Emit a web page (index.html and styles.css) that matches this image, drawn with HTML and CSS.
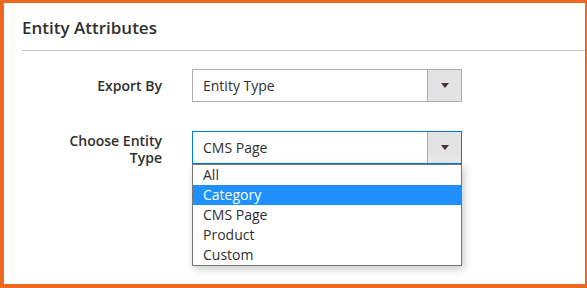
FILE: index.html
```html
<!DOCTYPE html>
<html lang="en">
<head>
<meta charset="utf-8">
<title>Entity Attributes</title>
<link rel="stylesheet" href="styles.css">
</head>
<body>
<div class="frame">
  <div class="section-title">Entity Attributes</div>
  <div class="form">
    <div class="field">
      <div class="label label-single">Export By</div>
      <div class="select">
        <span class="select-value">Entity Type</span>
        <span class="select-btn"><span class="arrow"></span></span>
      </div>
    </div>
    <div class="field">
      <div class="label label-multi">Choose Entity<br>Type</div>
      <div class="select select-focus">
        <span class="select-value">CMS Page</span>
        <span class="select-btn"><span class="arrow"></span></span>
        <ul class="options">
          <li class="option">All</li>
          <li class="option option-active">Category</li>
          <li class="option">CMS Page</li>
          <li class="option">Product</li>
          <li class="option">Custom</li>
        </ul>
      </div>
    </div>
  </div>
</div>
</body>
</html>
```

FILE: styles.css
```css
html, body {
  margin: 0;
  padding: 0;
  background: #ffffff;
}
body {
  font-family: "Open Sans", "DejaVu Sans", sans-serif;
  color: #303030;
}
.frame {
  box-sizing: border-box;
  width: 587px;
  height: 288px;
  border-style: solid;
  border-color: #ee6723;
  border-width: 3px 2px 4px 4px;
  background: #ffffff;
  overflow: hidden;
}
.section-title {
  margin-left: 18px;
  padding-top: 13px;
  padding-bottom: 10px;
  font-size: 17px;
  line-height: 24px;
  font-weight: 600;
  color: #303030;
  border-bottom: 1px solid #c9c3b6;
}
.form {
  display: flex;
  flex-direction: column;
  gap: 29px;
  margin-top: 18px;
  padding-left: 18px;
}
.field {
  display: flex;
  gap: 30px;
}
.label {
  width: 140px;
  text-align: right;
  font-size: 14px;
  font-weight: 600;
  color: #303030;
}
.label-single {
  line-height: 33px;
}
.label-multi {
  line-height: 17.5px;
  padding-top: 0.5px;
}
.select {
  position: relative;
  box-sizing: border-box;
  width: 270px;
  height: 33px;
  border: 1px solid #adadad;
  display: flex;
  background: #ffffff;
}
.select-focus {
  border-color: #007bdb;
}
.select-value {
  flex: 1;
  padding-left: 10px;
  font-size: 14px;
  line-height: 31px;
  color: #303030;
}
.select-btn {
  box-sizing: border-box;
  width: 34px;
  border-left: 1px solid #adadad;
  background: #e3e3e3;
  display: flex;
  align-items: center;
  justify-content: center;
}
.select-focus .select-btn {
  background: linear-gradient(#e3e3e3 0%, #e3e3e3 65%, #ececec 100%);
}
.arrow {
  width: 0;
  height: 0;
  border-style: solid;
  border-width: 5px 4px 0 4px;
  border-color: #41362f transparent transparent transparent;
}
.options {
  position: absolute;
  top: 100%;
  left: -1px;
  width: 270px;
  box-sizing: border-box;
  margin: 1px 0 0 0;
  padding: 0;
  list-style: none;
  border: 1px solid #767676;
  background: #ffffff;
  box-shadow: 2px 3px 8px rgba(0, 0, 0, 0.22);
}
.option {
  height: 20px;
  line-height: 19px;
  padding-left: 10px;
  font-size: 14px;
  color: #303030;
}
.option-active {
  background: #1e90ff;
  color: #ffffff;
}
```
